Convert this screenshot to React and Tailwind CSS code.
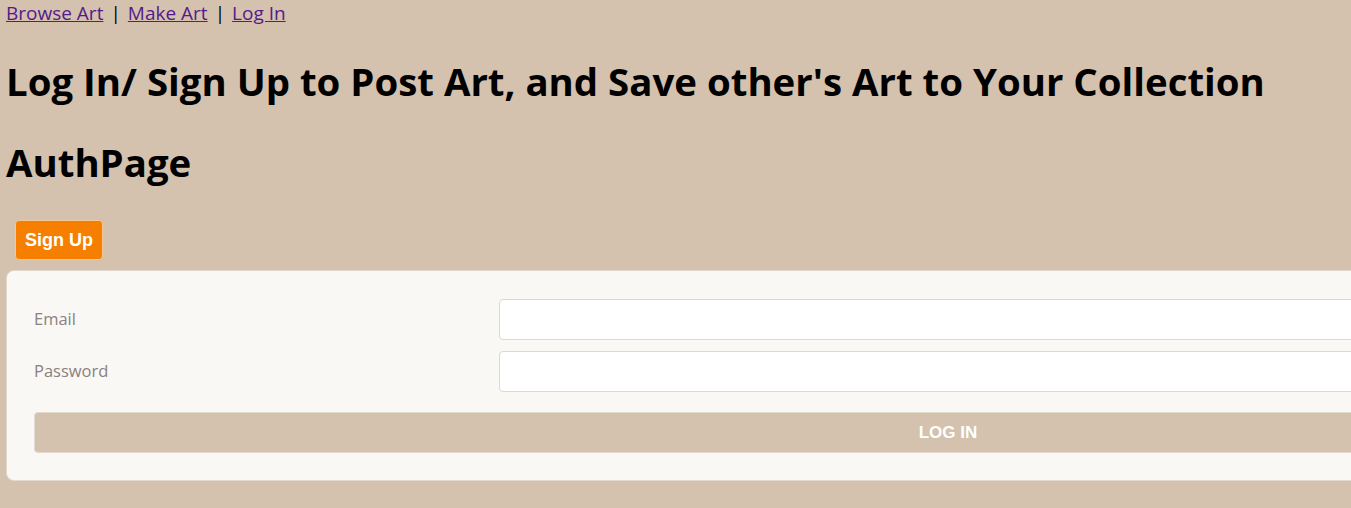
export default function App() {
  return (
    <div className="min-h-[508px] w-full overflow-hidden bg-[#d4c1ae] font-['Open_Sans',sans-serif] text-black">
      <nav className="px-[6px] pt-[1px] text-[19px] leading-[24px]">
        <a href="#" className="text-[#551a8b] underline">Browse Art</a>
        <span className="mx-[7px]">|</span>
        <a href="#" className="text-[#551a8b] underline">Make Art</a>
        <span className="mx-[7px]">|</span>
        <a href="#" className="text-[#551a8b] underline">Log In</a>
      </nav>
      <h1 className="mx-[6px] mt-[33px] text-[38.4px] font-bold leading-[46px] whitespace-nowrap">
        Log In/ Sign Up to Post Art, and Save other's Art to Your Collection
      </h1>
      <h2 className="mx-[6px] mt-[35px] text-[38.4px] font-bold leading-[46px]">AuthPage</h2>
      <div className="mt-[35px] px-[15px]">
        <button className="h-[40px] rounded-[4px] border border-[#f3c89a] bg-[#f77f00] px-[9px] font-['Liberation_Sans',Arial,sans-serif] text-[18px] font-bold text-white">
          Sign Up
        </button>
      </div>
      <div className="ml-[6px] mt-[10px] w-[1884px] rounded-[8px] border border-[#e2d9cf] bg-[#f9f8f4] px-[27px] pt-[28px] pb-[27px]">
        <div className="flex items-center">
          <label className="w-[465px] text-[16.5px] text-[#8b8180]">Email</label>
          <input className="h-[41px] flex-1 rounded-[4px] border border-[#ddd8d2] bg-white" />
        </div>
        <div className="mt-[11px] flex items-center">
          <label className="w-[465px] text-[16.5px] text-[#8b8180]">Password</label>
          <input type="password" className="h-[41px] flex-1 rounded-[4px] border border-[#ddd8d2] bg-white" />
        </div>
        <button className="mt-[20px] h-[41px] w-full rounded-[4px] border border-[#e2d9cf] bg-[#d4c1ae] font-['Liberation_Sans',Arial,sans-serif] text-[17px] font-bold text-white">
          LOG IN
        </button>
      </div>
    </div>
  );
}
